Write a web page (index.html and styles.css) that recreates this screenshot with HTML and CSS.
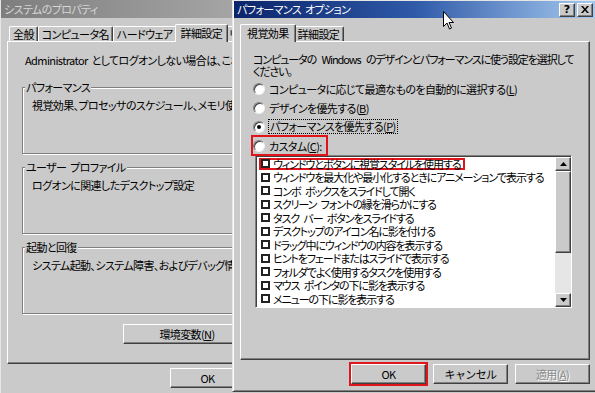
FILE: index.html
```html
<!DOCTYPE html>
<html lang="ja">

<head>
    <meta charset="UTF-8">
    <title>パフォーマンス オプション</title>
    <link rel="stylesheet" href="styles.css">
</head>

<body>
    <div class="desktop">
        <!-- background dialog, mostly covered -->
        <div class="win sysprops">
            <div class="frame">
                <div class="titlebar inactive"><span class="caption">システムのプロパティ</span></div>
                <div class="win-body">
                    <div class="tabs">
                        <div class="tab">全般</div>
                        <div class="tab">コンピュータ名</div>
                        <div class="tab">ハードウェア</div>
                        <div class="tab active">詳細設定</div>
                        <div class="tab">リモート</div>
                    </div>
                    <div class="panel sys-panel">
                        <p class="note">Administrator としてログオンしない場合は、これらの変更のほとんどは実行できません。</p>
                        <fieldset class="group">
                            <legend>パフォーマンス</legend>
                            <p>視覚効果、プロセッサのスケジュール、メモリ使用、および仮想メモリ</p>
                        </fieldset>
                        <fieldset class="group">
                            <legend>ユーザー プロファイル</legend>
                            <p>ログオンに関連したデスクトップ設定</p>
                        </fieldset>
                        <fieldset class="group">
                            <legend>起動と回復</legend>
                            <p>システム起動、システム障害、およびデバッグ情報</p>
                        </fieldset>
                        <div class="panel-buttons">
                            <button class="btn env">環境変数(<u>N</u>)</button>
                        </div>
                    </div>
                    <div class="dlg-buttons sys-buttons">
                        <button class="btn">OK</button>
                    </div>
                </div>
            </div>
        </div>

        <!-- active dialog -->
        <div class="win perf">
            <div class="titlebar active">
                <span class="caption">パフォーマンス オプション</span>
                <div class="caption-buttons">
                    <button class="cap-btn">?</button>
                    <button class="cap-btn close">
                        <svg width="8" height="7" viewBox="0 0 8 7">
                            <path d="M0 0 L2 0 L4 2.5 L6 0 L8 0 L5 3.5 L8 7 L6 7 L4 4.5 L2 7 L0 7 L3 3.5 Z" fill="#000" />
                        </svg>
                    </button>
                </div>
            </div>
            <div class="win-body">
                <div class="tabs">
                    <div class="tab active">視覚効果</div>
                    <div class="tab">詳細設定</div>
                </div>
                <div class="panel perf-panel">
                    <p class="desc">コンピュータの Windows のデザインとパフォーマンスに使う設定を選択して<br>ください。</p>
                    <div class="radios">
                        <div class="radio-row"><span class="radio"></span>コンピュータに応じて最適なものを自動的に選択する(<u>L</u>)</div>
                        <div class="radio-row"><span class="radio"></span>デザインを優先する(<u>B</u>)</div>
                        <div class="radio-row"><span class="radio checked"></span><span class="focus">パフォーマンスを優先する(<u>P</u>)</span></div>
                        <div class="radio-row"><span class="marked"><span class="radio"></span>カスタム(<u>C</u>):</span></div>
                    </div>
                    <div class="listbox">
                        <ul class="items">
                            <li><span class="marked"><span class="check"></span>ウィンドウとボタンに視覚スタイルを使用する</span></li>
                            <li><span class="check"></span>ウィンドウを最大化や最小化するときにアニメーションで表示する</li>
                            <li><span class="check"></span>コンボ ボックスをスライドして開く</li>
                            <li><span class="check"></span>スクリーン フォントの縁を滑らかにする</li>
                            <li><span class="check"></span>タスク バー ボタンをスライドする</li>
                            <li><span class="check"></span>デスクトップのアイコン名に影を付ける</li>
                            <li><span class="check"></span>ドラッグ中にウィンドウの内容を表示する</li>
                            <li><span class="check"></span>ヒントをフェードまたはスライドで表示する</li>
                            <li><span class="check"></span>フォルダでよく使用するタスクを使用する</li>
                            <li><span class="check"></span>マウス ポインタの下に影を表示する</li>
                            <li><span class="check"></span>メニューの下に影を表示する</li>
                        </ul>
                        <div class="scrollbar">
                            <div class="sb-btn">
                                <svg width="7" height="4" viewBox="0 0 7 4"><path d="M3.5 0 L7 4 L0 4 Z" fill="#000" /></svg>
                            </div>
                            <div class="sb-thumb"></div>
                            <div class="sb-track"></div>
                            <div class="sb-btn">
                                <svg width="7" height="4" viewBox="0 0 7 4"><path d="M0 0 L7 0 L3.5 4 Z" fill="#000" /></svg>
                            </div>
                        </div>
                    </div>
                </div>
                <div class="dlg-buttons">
                    <button class="btn marked-btn">OK</button>
                    <button class="btn">キャンセル</button>
                    <button class="btn" disabled>適用(<u>A</u>)</button>
                </div>
            </div>
        </div>

        <svg class="cursor" width="12" height="20" viewBox="0 0 12 20">
            <path d="M0.5 0.5 L0.5 15.5 L4 12 L6.5 18 L8.5 17 L6 11.5 L10.5 11.5 Z" fill="#fff" stroke="#000" stroke-width="1" />
        </svg>
    </div>
</body>

</html>
```

FILE: styles.css
```css
* {
    margin: 0px;
    padding: 0px;
    box-sizing: border-box;
}

body {
    width: 595px;
    height: 393px;
    overflow: hidden;
    background-color: #cacaca;
    font-family: "Noto Sans CJK JP", "Noto Sans", sans-serif;
    font-size: 11px;
    font-feature-settings: "palt";
    letter-spacing: -0.6px;
    word-spacing: 2px;
    color: #000;
}

.desktop {
    display: flex;
    height: 393px;
    position: relative;
}

.win {
    flex: none;
    height: 393px;
    background-color: #cacaca;
}

/* ---------- title bars ---------- */

.titlebar {
    display: flex;
    align-items: center;
    height: 17px;
    padding-left: 3px;
    white-space: nowrap;
}

.titlebar.inactive {
    height: 18px;
    background: linear-gradient(to right, #7e7e7e, #c4c4c4);
    color: #d6d6d6;
}

.titlebar.active {
    background: linear-gradient(to right, #0a246a 0%, #2f5aa8 50%, #a6caf0 100%);
    color: #fff;
}

.caption {
    flex: 1;
    line-height: 17px;
}

.caption-buttons {
    display: flex;
    gap: 2px;
    padding-right: 3px;
}

.cap-btn {
    width: 16px;
    height: 14px;
    display: flex;
    align-items: center;
    justify-content: center;
    background-color: #cacaca;
    border: 1px solid;
    border-color: #fff #404040 #404040 #fff;
    box-shadow: inset -1px -1px #808080;
    font-family: "DejaVu Sans", sans-serif;
    font-weight: bold;
    font-size: 11px;
    line-height: 11px;
}

/* ---------- tabs and panels ---------- */

.win-body {
    padding: 6px 0 0 6px;
}

.tabs {
    display: flex;
    align-items: flex-end;
    height: 17px;
    padding-left: 2px;
    position: relative;
    z-index: 1;
}

.tab {
    height: 15px;
    padding: 0 4px;
    line-height: 14px;
    white-space: nowrap;
    border-top: 1px solid #fff;
    border-left: 1px solid #fff;
    border-right: 1px solid #404040;
    box-shadow: inset -1px 0 #808080;
    border-radius: 2px 2px 0 0;
    background-color: #cacaca;
}

.tab.active {
    height: 18px;
    margin: 0 -2px -1px -2px;
    padding: 1px 6px 0;
    position: relative;
}

.tab.active + .tab {
    border-left: none;
}

.sysprops .tab {
    padding: 0 3px;
}

.sysprops .tab.active {
    padding: 1px 5px 0;
}

.panel {
    border-top: 1px solid #fff;
    border-left: 1px solid #fff;
    border-right: 1px solid #404040;
    border-bottom: 1px solid #404040;
    box-shadow: inset -1px -1px #808080;
}

.dlg-buttons {
    display: flex;
    justify-content: flex-end;
    gap: 7px;
    margin-top: 4px;
}

.btn {
    width: 75px;
    height: 20px;
    font-family: inherit;
    font-size: 11px;
    letter-spacing: -0.6px;
    background-color: #cacaca;
    color: #000;
    border: 1px solid;
    border-color: #fff #404040 #404040 #fff;
    box-shadow: inset -1px -1px #808080;
}

.btn:disabled {
    color: #8a8a8a;
    text-shadow: 1px 1px #fff;
}

/* ---------- system properties (behind) ---------- */

.sysprops {
    width: 232px;
    overflow: hidden;
}

.sysprops .frame {
    width: 420px;
    height: 393px;
    border-left: 1px solid #e6e6e6;
}

.sys-panel {
    width: 406px;
    height: 323px;
    padding: 11px 0 0 14px;
}

.note {
    line-height: 14px;
    margin-left: 3px;
    white-space: nowrap;
}

.group {
    width: 380px;
    height: 74px;
    margin-top: 6px;
    padding: 0 2px;
    border: 1px solid #808080;
    box-shadow: inset 1px 1px #fff, 1px 1px #fff;
}

.note + .group {
    margin-top: 13px;
}

.group legend {
    padding: 0 1px;
    line-height: 14px;
    background-color: #cacaca;
}

.group p {
    margin: 4px 0 0 7px;
    line-height: 14px;
    white-space: nowrap;
}

.panel-buttons {
    margin: 10px 0 0 101px;
}

.btn.env {
    width: 128px;
}

.sys-buttons {
    justify-content: flex-start;
    margin-left: 163px;
}

/* ---------- performance options ---------- */

.perf {
    width: 364px;
    height: 392px;
    border-top: 1px solid #e6e6e6;
    border-left: 1px solid #e6e6e6;
    border-bottom: 1px solid #404040;
    box-shadow: inset 1px 1px #fff, inset 0 -1px #808080;
    padding-left: 1px;
}

.perf .win-body {
    padding-right: 6px;
}

.perf-panel {
    height: 319px;
    padding: 11px 0 0 12px;
}

.desc {
    line-height: 12px;
    white-space: nowrap;
    letter-spacing: -1.1px;
    word-spacing: 4px;
}

.radios {
    margin-top: 2px;
}

.radio-row {
    display: flex;
    align-items: center;
    height: 19px;
    white-space: nowrap;
}

.radio {
    width: 12px;
    height: 12px;
    margin-right: 4px;
    border-radius: 50%;
    background-color: #fff;
    border: 1px solid;
    border-color: #808080 #f0f0f0 #f0f0f0 #808080;
    box-shadow: inset 1px 1px #404040;
    display: flex;
    align-items: center;
    justify-content: center;
    flex: none;
}

.radio.checked::after {
    content: "";
    width: 4px;
    height: 4px;
    border-radius: 50%;
    background-color: #000;
}

.focus {
    outline: 1px dotted #000;
    padding: 0 1px;
    line-height: 13px;
}

.marked {
    display: inline-flex;
    align-items: center;
    border: 2px solid #e0141b;
    margin-left: -2px;
    padding-right: 4px;
    height: 21px;
}

.listbox {
    display: flex;
    width: 317px;
    height: 153px;
    margin-left: 2px;
    background-color: #fff;
    border: 1px solid;
    border-color: #808080 #fff #fff #808080;
    box-shadow: inset 1px 1px #404040;
    padding: 1px 0 0 1px;
}

.items {
    flex: 1;
    list-style: none;
    padding-left: 4px;
    overflow: hidden;
    letter-spacing: -1.1px;
    word-spacing: 3px;
}

.items li {
    display: flex;
    align-items: center;
    height: 13.5px;
    white-space: nowrap;
}

.items .marked {
    height: 12px;
    margin-left: -2px;
    padding-right: 3px;
}

.check {
    width: 9px;
    height: 9px;
    margin-right: 3px;
    border: 2px solid #222;
    background-color: #fff;
    flex: none;
}

.scrollbar {
    width: 16px;
    display: flex;
    flex-direction: column;
}

.sb-btn {
    height: 14px;
    display: flex;
    align-items: center;
    justify-content: center;
    background-color: #cacaca;
    border: 1px solid;
    border-color: #fff #404040 #404040 #fff;
    box-shadow: inset -1px -1px #808080;
}

.sb-thumb {
    height: 82px;
    background-color: #cacaca;
    border: 1px solid;
    border-color: #fff #404040 #404040 #fff;
    box-shadow: inset -1px -1px #808080;
}

.sb-track {
    flex: 1;
    background-color: #e6e6e6;
}

.marked-btn {
    outline: 2px solid #e0141b;
    outline-offset: 0px;
}

.cursor {
    position: absolute;
    left: 443px;
    top: 11px;
}
```
